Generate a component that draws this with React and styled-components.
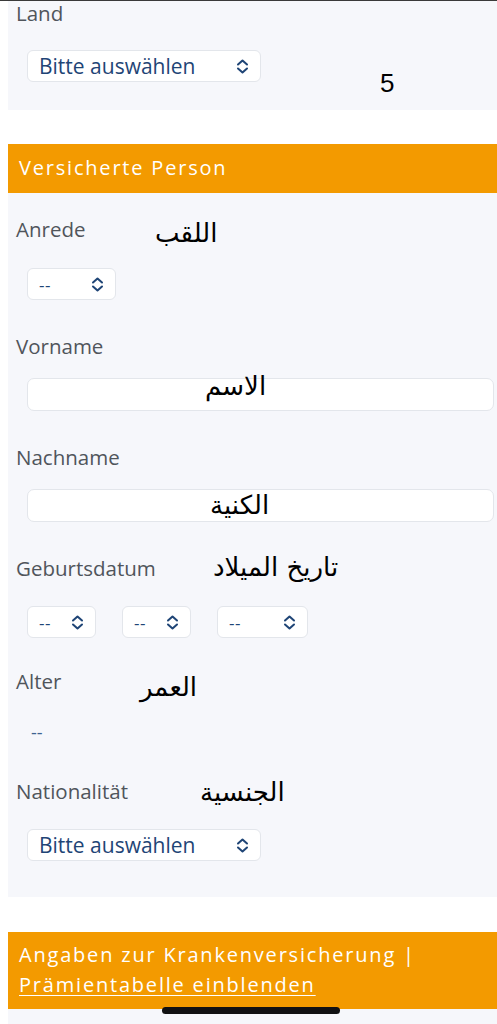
import styled, { createGlobalStyle } from 'styled-components';

const GlobalStyle = createGlobalStyle`
  html, body {
    margin: 0;
    padding: 0;
    background: #ffffff;
  }
  body {
    font-family: 'Open Sans', 'Noto Sans', sans-serif;
  }
`;

const Page = styled.div`
  width: 497px;
  height: 1024px;
  overflow: hidden;
  position: relative;
  background: #ffffff;
`;

const TopEdge = styled.div`
  height: 1px;
  background: #3a3a3a;
`;

const Panel = styled.div`
  margin-left: 8px;
  background: #f6f7fb;
  padding-top: ${p => p.$top || 0}px;
  padding-bottom: ${p => p.$bottom || 0}px;
`;

const Header = styled.div`
  margin-left: 8px;
  margin-top: ${p => p.$gap}px;
  background: #f39a00;
  color: #ffffff;
  font-size: 20px;
  letter-spacing: 1.8px;
  line-height: 30px;
  padding: ${p => p.$pad};
  padding-left: 11px;
`;

const HeaderLink = styled.span`
  text-decoration: underline;
  text-underline-offset: 3px;
  text-decoration-thickness: 1px;
`;

const Field = styled.div`
  position: relative;
  margin-top: ${p => p.$gap || 0}px;
`;

const Label = styled.div`
  padding-left: 8px;
  font-size: 20.5px;
  line-height: 24px;
  color: #50555b;
`;

const Select = styled.div`
  margin-top: ${p => p.$gap}px;
  margin-left: ${p => p.$left || 19}px;
  width: ${p => p.$w}px;
  height: 32px;
  box-sizing: border-box;
  background: #ffffff;
  border: 1px solid #e3e6eb;
  border-radius: 6px;
  display: flex;
  align-items: center;
  justify-content: space-between;
  padding: 0 11px 0 11px;
  color: #1f4576;
  font-size: 21px;
`;

const SmallText = styled.span`
  font-size: 17px;
  letter-spacing: 0.5px;
`;

const DateRow = styled.div`
  display: flex;
  gap: 26px;
  margin-top: 26px;
  margin-left: 19px;
`;

const DateSelect = styled(Select)`
  margin: 0;
`;

const TextInput = styled.div`
  margin: 20px 3px 0 19px;
  height: 33px;
  background: #ffffff;
  border: 1px solid #e3e6eb;
  border-radius: 7px;
  box-sizing: border-box;
`;

const Value = styled.div`
  margin-top: 27px;
  padding-left: 23px;
  color: #3f6390;
  font-size: 18px;
  line-height: 24px;
`;

const Note = styled.div`
  position: absolute;
  left: ${p => p.$x}px;
  top: ${p => p.$y}px;
  font-family: 'DejaVu Sans', sans-serif;
  font-size: 26px;
  line-height: 32px;
  color: #000000;
  white-space: nowrap;
`;

const Digit = styled(Note)`
  font-family: 'Liberation Sans', Arial, sans-serif;
  font-size: 26px;
`;

const HomeBar = styled.div`
  position: absolute;
  left: 162px;
  top: 1007px;
  width: 178px;
  height: 7px;
  border-radius: 4px;
  background: #111113;
`;

function Chevron() {
  return (
    <svg width="13" height="15" viewBox="0 0 13 15" fill="none">
      <path d="M2 5.5 L6.5 1.5 L11 5.5" stroke="#1f4576" strokeWidth="2" strokeLinecap="round" strokeLinejoin="round" />
      <path d="M2 9.5 L6.5 13.5 L11 9.5" stroke="#1f4576" strokeWidth="2" strokeLinecap="round" strokeLinejoin="round" />
    </svg>
  );
}

function App() {
  return (
    <Page>
      <GlobalStyle />
      <TopEdge />
      <Panel $bottom={28}>
        <Field>
          <Label>Land</Label>
          <Select $gap={25} $w={234}>
            <span>Bitte auswählen</span>
            <Chevron />
          </Select>
          <Digit $x={372} $y={66}>5</Digit>
        </Field>
      </Panel>

      <Header $gap={34} $pad="9px 0 10px">Versicherte Person</Header>

      <Panel $top={24} $bottom={36}>
        <Field>
          <Label>Anrede</Label>
          <Select $gap={27} $w={89}>
            <SmallText>--</SmallText>
            <Chevron />
          </Select>
          <Note $x={147} $y={0}>اللقب</Note>
        </Field>

        <Field $gap={34}>
          <Label>Vorname</Label>
          <TextInput />
          <Note $x={197} $y={36}>الاسم</Note>
        </Field>

        <Field $gap={34}>
          <Label>Nachname</Label>
          <TextInput />
          <Note $x={202} $y={44}>الكنية</Note>
        </Field>

        <Field $gap={34}>
          <Label>Geburtsdatum</Label>
          <DateRow>
            <DateSelect $w={69}>
              <SmallText>--</SmallText>
              <Chevron />
            </DateSelect>
            <DateSelect $w={69}>
              <SmallText>--</SmallText>
              <Chevron />
            </DateSelect>
            <DateSelect $w={91}>
              <SmallText>--</SmallText>
              <Chevron />
            </DateSelect>
          </DateRow>
          <Note $x={205} $y={-5}>تاريخ الميلاد</Note>
        </Field>

        <Field $gap={31}>
          <Label>Alter</Label>
          <Value>--</Value>
          <Note $x={132} $y={2}>العمر</Note>
        </Field>

        <Field $gap={35}>
          <Label>Nationalität</Label>
          <Select $gap={26} $w={234}>
            <span>Bitte auswählen</span>
            <Chevron />
          </Select>
          <Note $x={192} $y={-3}>الجنسية</Note>
        </Field>
      </Panel>

      <Header $gap={35} $pad="8px 0 9px">
        Angaben zur Krankenversicherung |<br />
        <HeaderLink>Prämientabelle einblenden</HeaderLink>
      </Header>
      <Panel $bottom={20} />
      <HomeBar />
    </Page>
  );
}

export default App;
